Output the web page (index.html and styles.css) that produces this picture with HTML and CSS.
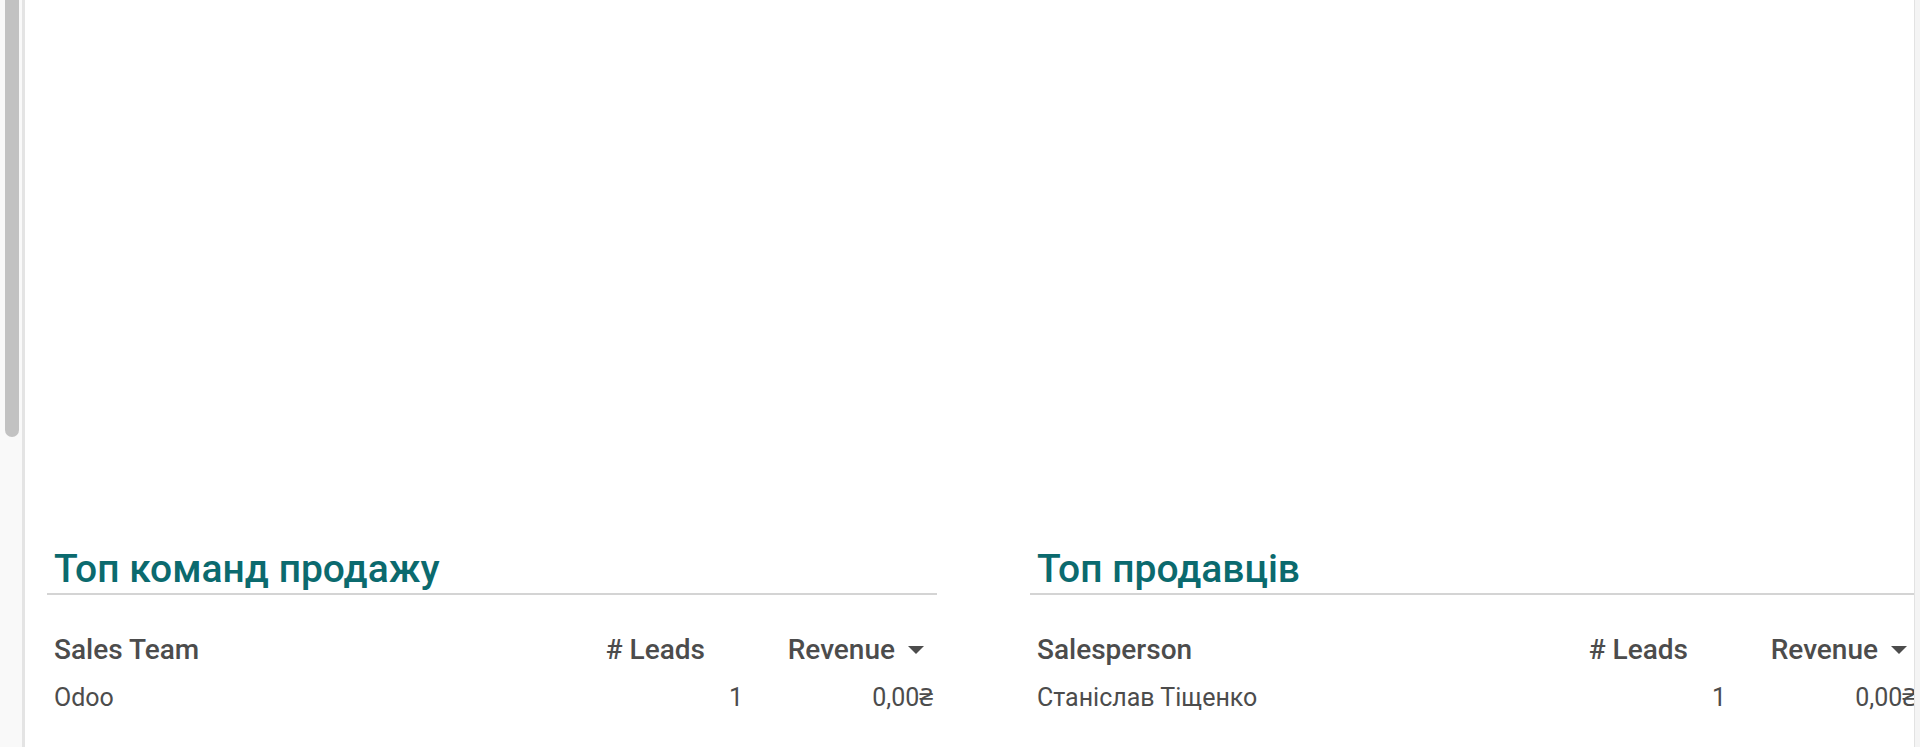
FILE: index.html
```html
<!DOCTYPE html>
<html lang="uk">
<head>
  <meta charset="UTF-8">
  <meta name="viewport" content="width=device-width, initial-scale=1.0">
  <title>CRM Dashboard</title>
  <link rel="stylesheet" href="styles.css">
</head>
<body>
  <div class="page">
    <div class="scroll-track">
      <div class="scroll-thumb"></div>
    </div>

    <div class="content">
      <div class="chart-area"></div>

      <div class="top-row">
        <div class="top-col">
          <h2 class="top-title">Топ команд продажу</h2>
          <table class="top-table">
            <thead>
              <tr>
                <th class="col-name">Sales Team</th>
                <th class="col-num">#&nbsp;Leads<span class="caret hidden"></span></th>
                <th class="col-num">Revenue<span class="caret"></span></th>
              </tr>
            </thead>
            <tbody>
              <tr>
                <td class="col-name">Odoo</td>
                <td class="col-num">1</td>
                <td class="col-num">0,00₴</td>
              </tr>
            </tbody>
          </table>
        </div>

        <div class="top-col">
          <h2 class="top-title">Топ продавців</h2>
          <table class="top-table">
            <thead>
              <tr>
                <th class="col-name">Salesperson</th>
                <th class="col-num">#&nbsp;Leads<span class="caret hidden"></span></th>
                <th class="col-num">Revenue<span class="caret"></span></th>
              </tr>
            </thead>
            <tbody>
              <tr>
                <td class="col-name">Станіслав Тіщенко</td>
                <td class="col-num">1</td>
                <td class="col-num">0,00₴</td>
              </tr>
            </tbody>
          </table>
        </div>
      </div>
    </div>

    <div class="edge"></div>
  </div>
</body>
</html>
```

FILE: styles.css
```css
html, body {
  margin: 0;
  height: 100%;
}
body {
  font-family: Roboto, "Noto Sans", sans-serif;
  color: #4c4c4c;
  background-color: #fff;
  overflow: hidden;
}
.page {
  display: flex;
  height: 100vh;
}
.scroll-track {
  width: 22px;
  flex-shrink: 0;
  background-color: #f9f9f9;
  border-right: 3px solid #e4e4e4;
}
.scroll-thumb {
  width: 14px;
  height: 437px;
  margin-left: 5px;
  background-color: #c2c2c2;
  border-radius: 0 0 7px 7px;
}
.content {
  flex: 1;
  min-width: 0;
  overflow: hidden;
  border-right: 1px solid #e2e2e2;
}
.edge {
  width: 5px;
  flex-shrink: 0;
  background-color: #f4f4f4;
}
.chart-area {
  height: 545px;
}
.top-row {
  display: grid;
  grid-template-columns: 983px 983px;
}
.top-col {
  padding-left: 22px;
}
.top-title {
  width: 883px;
  margin: 0;
  padding-left: 7px;
  font-size: 39px;
  font-weight: 500;
  line-height: 48px;
  color: #0b6a6e;
  border-bottom: 2px solid #d4d4d4;
}
.top-table {
  width: 890px;
  margin-top: 30px;
  border-collapse: collapse;
}
.top-table th {
  padding: 8px 10px 4px 7px;
  font-size: 28px;
  font-weight: 500;
  line-height: 1.2;
  white-space: nowrap;
}
.top-table td {
  padding: 12px 4px 4px 7px;
  font-size: 25px;
  line-height: 1.2;
}
.col-name {
  text-align: left;
}
.col-num {
  width: 173px;
  text-align: right;
}
.caret {
  display: inline-block;
  width: 0;
  height: 0;
  margin: 0 3px 0 13px;
  border-left: 8px solid transparent;
  border-right: 8px solid transparent;
  border-top: 8px solid #4c4c4c;
  vertical-align: middle;
  position: relative;
  top: -2px;
}
.caret.hidden {
  visibility: hidden;
}
```
